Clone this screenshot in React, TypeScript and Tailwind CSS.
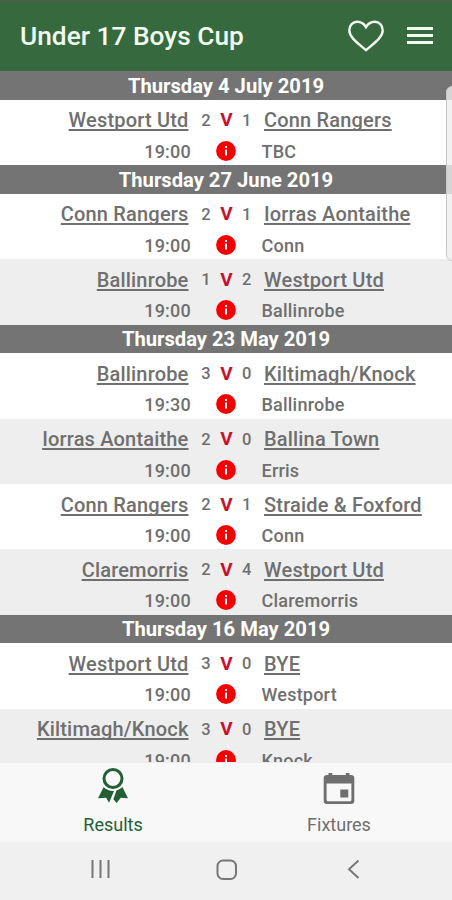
import { useState } from 'react';

type Match = {
    home: string;
    homeScore: number;
    awayScore: number;
    away: string;
    time: string;
    venue: string;
};

type MatchDay = {
    date: string;
    matches: Match[];
};

const matchDays: MatchDay[] = [
    {
        date: 'Thursday 4 July 2019',
        matches: [
            { home: 'Westport Utd', homeScore: 2, awayScore: 1, away: 'Conn Rangers', time: '19:00', venue: 'TBC' },
        ],
    },
    {
        date: 'Thursday 27 June 2019',
        matches: [
            { home: 'Conn Rangers', homeScore: 2, awayScore: 1, away: 'Iorras Aontaithe', time: '19:00', venue: 'Conn' },
            { home: 'Ballinrobe', homeScore: 1, awayScore: 2, away: 'Westport Utd', time: '19:00', venue: 'Ballinrobe' },
        ],
    },
    {
        date: 'Thursday 23 May 2019',
        matches: [
            { home: 'Ballinrobe', homeScore: 3, awayScore: 0, away: 'Kiltimagh/Knock', time: '19:30', venue: 'Ballinrobe' },
            { home: 'Iorras Aontaithe', homeScore: 2, awayScore: 0, away: 'Ballina Town', time: '19:00', venue: 'Erris' },
            { home: 'Conn Rangers', homeScore: 2, awayScore: 1, away: 'Straide & Foxford', time: '19:00', venue: 'Conn' },
            { home: 'Claremorris', homeScore: 2, awayScore: 4, away: 'Westport Utd', time: '19:00', venue: 'Claremorris' },
        ],
    },
    {
        date: 'Thursday 16 May 2019',
        matches: [
            { home: 'Westport Utd', homeScore: 3, awayScore: 0, away: 'BYE', time: '19:00', venue: 'Westport' },
            { home: 'Kiltimagh/Knock', homeScore: 3, awayScore: 0, away: 'BYE', time: '19:00', venue: 'Knock' },
        ],
    },
];

const InfoIcon = () => (
    <svg width="20" height="20" viewBox="0 0 20 20">
        <circle cx="10" cy="10" r="9.9" fill="#f50000" />
        <path d="M9 5h2v2H9zM9 8.5h2v6H9z" fill="#fff" />
    </svg>
);

const HeartIcon = () => (
    <svg width="38" height="34" viewBox="0 0 38 34" fill="none" stroke="#f1fbf0" strokeWidth="2.4">
        <path d="M19 31.2C11 24.2 2.3 18.5 2.3 11.2C2.3 6.3 5.8 2.7 10.3 2.7C13.9 2.7 17 4.7 19 8.1C21 4.7 24.1 2.7 27.7 2.7C32.2 2.7 35.7 6.3 35.7 11.2C35.7 18.5 27 24.2 19 31.2Z" />
    </svg>
);

const MenuIcon = () => (
    <svg width="26" height="20" viewBox="0 0 26 20" fill="#f1fbf0">
        <path d="M0 1h26v3H0zM0 8h26v3H0zM0 15h26v3H0z" />
    </svg>
);

const RibbonIcon = () => (
    <svg width="32" height="38" viewBox="0 0 32 38">
        <circle cx="16" cy="11.5" r="9" fill="none" stroke="currentColor" strokeWidth="3" />
        <path d="M6.7 20C9 22.6 12.4 24.1 17 23.9L12 35.8L9.2 30.8L1 31.3Z" fill="currentColor" />
        <path d="M19.6 23.2C22 22.6 24 21.5 25.4 20L31 31.2L23.8 30.8L19.6 36L16.4 32.2Z" fill="currentColor" />
    </svg>
);

const CalendarIcon = () => (
    <svg width="32" height="32" viewBox="0 0 32 32" fill="currentColor">
        <path fillRule="evenodd" d="M5.5 0h3.7v2h13.6V0h3.7v2H28a3.3 3.3 0 0 1 3.3 3.3v22.4A3.3 3.3 0 0 1 28 31H4a3.3 3.3 0 0 1-3.3-3.3V5.3A3.3 3.3 0 0 1 4 2h1.5zM3.6 10.5v16.3a1.5 1.5 0 0 0 1.5 1.5h21.8a1.5 1.5 0 0 0 1.5-1.5V10.5z" />
        <path d="M17.3 16.5h8v8h-8z" />
    </svg>
);

const TeamLink = ({ name }: { name: string }) => (
    <a className="underline decoration-[1.5px] underline-offset-2 tracking-[0.18px] [text-decoration-skip-ink:none]">{name}</a>
);

const MatchRow = ({ match, shaded }: { match: Match; shaded: boolean }) => {
    return (
        <div className={`h-[65.4px] shrink-0 ${shaded ? 'bg-[#eeeeee]' : 'bg-white'}`}>
            <div className="flex h-[38px] items-center pt-[3px] text-[20px] font-medium leading-6">
                <span className="w-[188.5px] text-right"><TeamLink name={match.home} /></span>
                <span className="w-[35px] pt-px text-center text-[16.5px]">{match.homeScore}</span>
                <span className="w-[6px] flex justify-center text-[19px] font-bold text-[#c9102f]">V</span>
                <span className="w-[34.5px] pt-px text-center text-[16.5px]">{match.awayScore}</span>
                <TeamLink name={match.away} />
            </div>
            <div className="flex h-[26px] items-center text-[18px] font-medium leading-6 tracking-[0.22px]">
                <span className="w-[191px] pt-[2px] text-right">{match.time}</span>
                <span className="flex w-[70.5px] justify-center"><InfoIcon /></span>
                <span className="pt-[2px]">{match.venue}</span>
            </div>
        </div>
    )
}

const App = () => {

    const [tab, setTab] = useState('results');

    return (
        <div className="flex h-[900px] w-[452px] flex-col overflow-hidden bg-white font-['Roboto',sans-serif] text-[#6f6f6f]">
            <header className="flex h-[71.3px] shrink-0 items-center border-t-2 border-[#496144] bg-[#36693d] pb-[2px] pl-[20px] pr-[19px]">
                <h1 className="flex-1 text-[26.3px] font-medium leading-8 text-[#f1fbf0]">Under 17 Boys Cup</h1>
                <button className="mr-[22px]"><HeartIcon /></button>
                <button><MenuIcon /></button>
            </header>

            <main className="relative flex min-h-0 flex-1 flex-col overflow-hidden">
                {matchDays.map((day) => (
                    <section key={day.date} className="shrink-0">
                        <h2 className="flex h-[28.6px] items-center justify-center bg-[#747474] text-[20.2px] font-bold leading-6 text-white">{day.date}</h2>
                        {day.matches.map((match, i) => (
                            <MatchRow key={i} match={match} shaded={i % 2 === 1} />
                        ))}
                    </section>
                ))}
                <div className="absolute left-[446px] top-[15px] h-[175px] w-[12px] rounded-lg border border-[#c8c8c8] bg-[#eeeeee]/80"></div>
            </main>

            <nav className="flex h-[80px] shrink-0 border-t border-[#ececec] bg-[#f8f8f8] text-[18px] leading-6">
                <button onClick={() => setTab('results')} className={`flex w-1/2 flex-col items-center pt-[4px] ${tab === 'results' ? 'text-[#225f34]' : 'text-[#6f6f6f]'}`}>
                    <RibbonIcon />
                    <span className="mt-[8px]">Results</span>
                </button>
                <button onClick={() => setTab('fixtures')} className={`flex w-1/2 flex-col items-center pt-[10px] ${tab === 'fixtures' ? 'text-[#225f34]' : 'text-[#6f6f6f]'}`}>
                    <CalendarIcon />
                    <span className="mt-[8px]">Fixtures</span>
                </button>
            </nav>

            <div className="flex h-[58px] shrink-0 items-start bg-[#f0f0f0] pl-[90px] pt-[17px] text-[#777777]">
                <svg width="21" height="20" viewBox="0 0 21 20" fill="none" stroke="currentColor" strokeWidth="2">
                    <path d="M2.5 1v18M10.5 1v18M18.5 1v18" />
                </svg>
                <svg className="ml-[105px]" width="22" height="22" viewBox="0 0 22 22" fill="none" stroke="currentColor" strokeWidth="2">
                    <rect x="1.5" y="1.5" width="18.5" height="18.5" rx="5.5" />
                </svg>
                <svg className="ml-[109px]" width="14" height="20" viewBox="0 0 14 20" fill="none" stroke="currentColor" strokeWidth="2">
                    <path d="M11.5 1.5L2 10.3L11.5 19" />
                </svg>
            </div>
        </div>
    )
}

export default App
